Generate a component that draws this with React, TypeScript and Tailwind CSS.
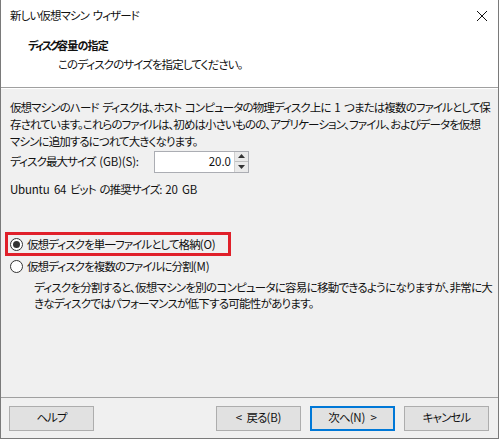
import { useState, type ReactNode } from "react";

const font = "font-['Noto_Sans_CJK_JP','Noto_Sans',sans-serif] [font-feature-settings:'palt']";

const L = ({ children }: { children: ReactNode }) => <span className="tracking-[-0.2px]">{children}</span>;

interface RadioProps {
  label: ReactNode;
  checked: boolean;
  onSelect: () => void;
  height: string;
}
const Radio = ({ label, checked, onSelect, height }: RadioProps) => {
  return (
    <div className={`flex items-center ${height} cursor-default whitespace-nowrap`} onClick={onSelect}>
      <div className="w-[13px] h-[13px] shrink-0 rounded-full border border-[#333] bg-white flex items-center justify-center">
        {checked && <div className="w-[7px] h-[7px] rounded-full bg-[#333]" />}
      </div>
      <span className="ml-[4px]">{label}</span>
    </div>
  );
};

const Button = ({ label, primary = false }: { label: ReactNode; primary?: boolean }) => (
  <button
    className={`w-[85px] h-[25px] text-[11.5px] tracking-[-0.9px] [word-spacing:3px] text-[#111] bg-[#e1e1e1] ${
      primary ? "border-2 border-[#0078d7]" : "border border-[#adadad]"
    }`}
  >
    {label}
  </button>
);

export default function App() {
  const [single, setSingle] = useState(true);

  return (
    <div
      className={`${font} w-[499px] h-[439px] bg-[#f0f0f0] text-[11.5px] tracking-[-0.9px] [word-spacing:2px] text-[#111] border-x border-b border-[#7a7a7a] flex flex-col overflow-hidden`}
    >
      {/* Title bar */}
      <div className="h-[31px] bg-white flex items-center justify-between pl-[9px] pr-[8px] shrink-0">
        <span>新しい仮想マシン ウィザード</span>
        <svg width="12" height="12" viewBox="0 0 12 12" className="mr-[2px]">
          <path d="M1 1 L11 11 M11 1 L1 11" stroke="#111" strokeWidth="1" />
        </svg>
      </div>

      {/* Header */}
      <div className="h-[56px] bg-white pl-[27px] pt-[5px] shrink-0">
        <div className="font-bold text-[11px] leading-[18px] whitespace-nowrap">
          <span className="tracking-[-2.4px]">ディスク</span>
          <span className="tracking-[-0.8px]">容量の指定</span>
        </div>
        <div className="pl-[30px] leading-[20px]">このディスクのサイズを指定してください。</div>
      </div>
      <div className="h-px bg-[#a0a0a0] shrink-0" />
      <div className="h-px bg-white shrink-0" />

      {/* Body */}
      <div className="flex-1 pl-[9px] pt-[10px] leading-[17px]">
        <div className="whitespace-nowrap">
          仮想マシンのハード ディスクは、ホスト コンピュータの物理ディスク上に <L>1</L> つまたは複数のファイルとして保
        </div>
        <div className="whitespace-nowrap">
          存されています。これらのファイルは、初めは小さいものの、アプリケーション、ファイル、およびデータを仮想
        </div>
        <div className="whitespace-nowrap">マシンに追加するにつれて大きくなります。</div>

        <div className="flex items-center h-[23px]">
          <span className="w-[144px] whitespace-nowrap">
            ディスク最大サイズ <L>(GB)(S):</L>
          </span>
          <div className="w-[95px] h-[22px] bg-white border border-[#abadb3] flex items-center">
            <span className="flex-1 text-right pr-[3px] tracking-normal">20.0</span>
            <div className="w-[14px] h-[20px] flex flex-col border-l border-[#d0d0d0]">
              <div className="flex-1 bg-[#eaeaea] border-b border-[#c0c0c0] flex items-center justify-center">
                <svg width="7" height="4" viewBox="0 0 7 4">
                  <path d="M3.5 0 L7 4 L0 4 Z" fill="#333" />
                </svg>
              </div>
              <div className="flex-1 bg-[#eaeaea] flex items-center justify-center">
                <svg width="7" height="4" viewBox="0 0 7 4">
                  <path d="M0 0 L7 0 L3.5 4 Z" fill="#333" />
                </svg>
              </div>
            </div>
          </div>
        </div>

        <div className="mt-[8px] whitespace-nowrap">
          <L>Ubuntu 64</L> ビット の推奨サイズ: <L>20 GB</L>
        </div>

        <div className="mt-[34px] -ml-[5px] w-[226px] h-[24px] border-[3px] border-[#e0202a] flex items-center pl-[2px]">
          <Radio
            height="h-[22px]"
            label={
              <>
                仮想ディスクを単一ファイルとして格納<L>(O)</L>
              </>
            }
            checked={single}
            onSelect={() => setSingle(true)}
          />
        </div>
        <Radio
          height="h-[20px]"
          label={
            <>
              仮想ディスクを複数のファイルに分割<L>(M)</L>
            </>
          }
          checked={!single}
          onSelect={() => setSingle(false)}
        />
        <div className="pl-[24px] pt-[3px] leading-[16px]">
          <div className="whitespace-nowrap tracking-[-0.75px]">
            ディスクを分割すると、仮想マシンを別のコンピュータに容易に移動できるようになりますが、非常に大
          </div>
          <div className="whitespace-nowrap tracking-[-0.75px]">
            きなディスクではパフォーマンスが低下する可能性があります。
          </div>
        </div>
      </div>

      {/* Footer */}
      <div className="h-px bg-[#a0a0a0] shrink-0" />
      <div className="h-[40px] flex items-center px-[8px] shrink-0">
        <Button label="ヘルプ" />
        <div className="flex-1" />
        <div className="flex gap-[9px] mr-[1px]">
          <Button label={<><L>&lt;</L> 戻る<L>(B)</L></>} />
          <Button label={<>次へ<L>(N) &gt;</L></>} primary />
          <Button label="キャンセル" />
        </div>
      </div>
    </div>
  );
}
